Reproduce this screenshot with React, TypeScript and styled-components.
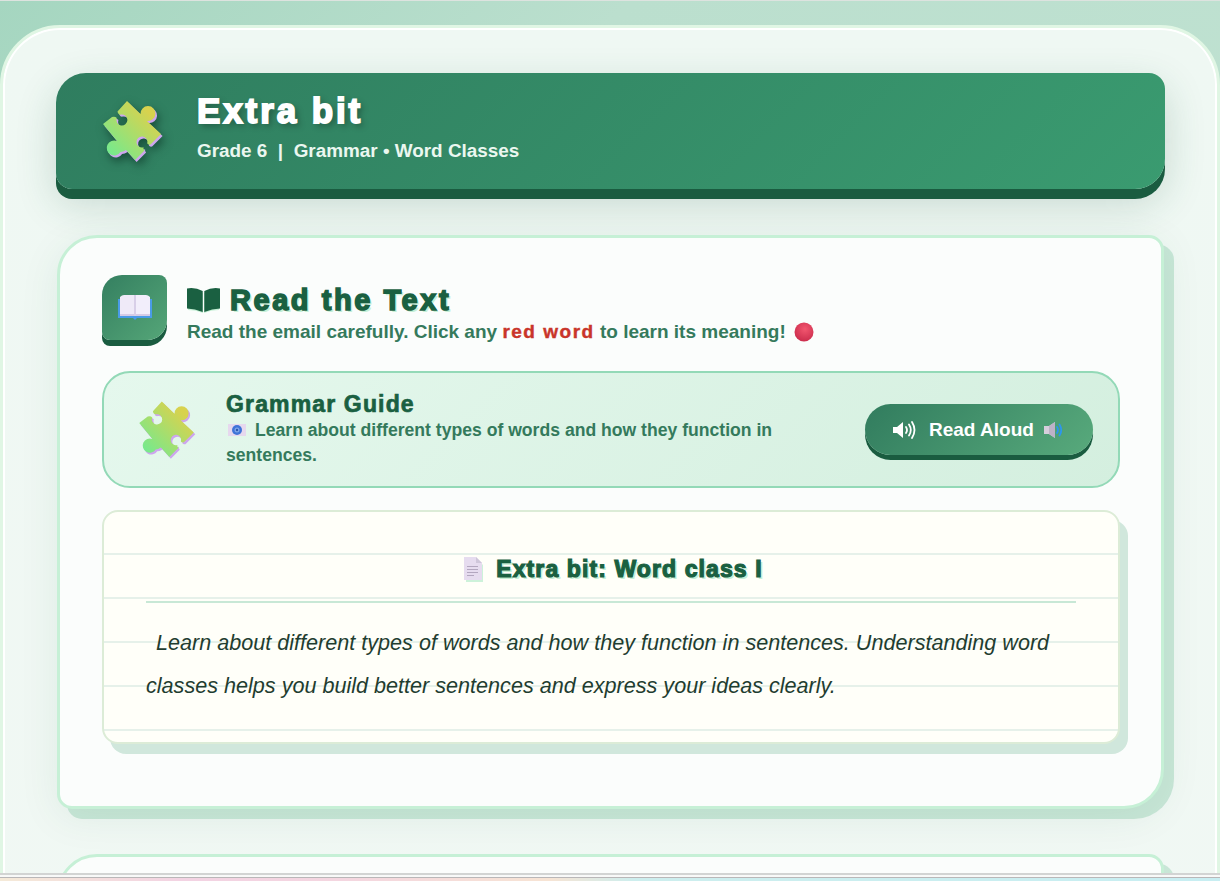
import * as React from "react";
import styled, { createGlobalStyle } from "styled-components";

const GlobalStyle = createGlobalStyle`
  html, body {
    margin: 0;
    height: 100%;
    overflow: hidden;
  }
  body {
    font-family: "Liberation Sans", Arial, sans-serif;
    background: linear-gradient(135deg, #a5d6c0 0%, #bbdfce 30%, #c2e3d3 100%);
  }
`;

const PUZZLE =
  "M37 10L50.5 23A7.5 7.5 0 1 1 57 30L71 43L60.5 53.5Q58 54 57.3 52.5A5.5 5.5 0 1 0 53.5 56.3Q53 58 54.5 59.5L45 69L36 59Q33 61 30.5 61A7.5 7.5 0 1 1 27 50L13 33L22 26Q25 25 26.8 27A5.5 5.5 0 1 0 31 23.6Q28 24 27.5 20.5Z";

const PuzzleIcon = ({ id, size, shadow }: { id: string; size: number; shadow: string }) => (
  <PuzzleSvg viewBox="0 0 85 80" width={size} height={(size * 80) / 85} shadow={shadow}>
    <defs>
      <linearGradient id={id} x1="0.1" y1="0.9" x2="0.8" y2="0.2">
        <stop offset="0" stopColor="#74ea8e" />
        <stop offset="1" stopColor="#d8d24e" />
      </linearGradient>
    </defs>
    <path d={PUZZLE} fill="#cda6ee" transform="translate(1.6 2)" />
    <path d={PUZZLE} fill={`url(#${id})`} />
  </PuzzleSvg>
);

const OpenBook = () => (
  <svg width="34" height="28" viewBox="0 0 34 28">
    <path d="M0 5h34v19H19l-2 2-2-2H0z" fill="#4a9be8" />
    <path d="M2 3q2-2 4-2h11v21H2z" fill="#efeaf8" />
    <path d="M17 1h11q2 0 4 2v19H17z" fill="#f2eefb" />
    <path d="M2 20h30v2H2z" fill="#d5cbe6" />
    <path d="M16 1h2v21h-2z" fill="#d8cfe8" />
  </svg>
);

const SolidBook = () => (
  <svg width="33" height="26" viewBox="0 0 33 26">
    <path d="M1 3Q9 2 16 6V26Q9 23 1 23z" fill="#c6f0d6" />
    <path d="M32 3Q24 2 17 6V26Q24 23 32 23z" fill="#c6f0d6" />
    <path d="M0 1.500Q8 0 15.700 4V25Q8 21.500 0 21.500z" fill="#1a6041" />
    <path d="M33 1.500Q25 0 17.300 4V25Q25 21.500 33 21.500z" fill="#1a6041" />
  </svg>
);

const RedBall = () => (
  <svg width="20" height="20" viewBox="0 0 20 20">
    <defs>
      <radialGradient id="ball" cx="0.55" cy="0.35" r="0.7">
        <stop offset="0" stopColor="#f2566f" />
        <stop offset="1" stopColor="#c92a4a" />
      </radialGradient>
    </defs>
    <circle cx="10" cy="10" r="9.500" fill="url(#ball)" />
  </svg>
);

const CameraBadge = () => (
  <svg width="18" height="14" viewBox="0 0 18 14">
    <rect x="0" y="1" width="18" height="12" fill="#e6d8ee" />
    <circle cx="9" cy="7" r="5" fill="#3f74d8" />
    <circle cx="9" cy="7" r="2.500" fill="#7fa6e8" />
    <circle cx="9" cy="7" r="1.200" fill="#2a55b0" />
  </svg>
);

const DocIcon = () => (
  <svg width="20" height="25" viewBox="0 0 20 25">
    <path d="M2 3h12l5 5v17H2z" fill="#cdf2da" />
    <path d="M0 0h12l6 6v17H0z" fill="#e6dcef" />
    <path d="M12 0l6 6h-6z" fill="#cfc6da" />
    <path d="M3 9h11v1H3zM3 12h11v1H3zM3 15h11v1H3zM3 18h7v1H3z" fill="#b3a7bf" />
  </svg>
);

const SpeakerWhite = () => (
  <svg width="24" height="20" viewBox="0 0 24 20" fill="none">
    <path d="M1 7h4l6-5v16l-6-5H1z" fill="#fff" />
    <path d="M14 7q2 3 0 6M17 4.500q3.600 5.500 0 11M20 2q5 8 0 16" stroke="#fff" strokeWidth="1.800" strokeLinecap="round" />
  </svg>
);

const SpeakerColor = () => (
  <svg width="20" height="18" viewBox="0 0 20 18" fill="none">
    <path d="M1 5h5l6-4v16l-6-4H1z" fill="#d6cedc" />
    <path d="M6 5l6-4v16l-6-4z" fill="#bdb2c7" />
    <path d="M14 6q2 3 0 6M16.500 3.500q3.500 5.500 0 11" stroke="#2c96f0" strokeWidth="1.800" strokeLinecap="round" />
  </svg>
);

const App = () => {
  return (
    <>
      <GlobalStyle />
      <Page>
        <Container>
          <Header>
            <PuzzleIcon id="puzzle-a" size={85} shadow="drop-shadow(2px 4px 5px rgba(0,30,20,0.5))" />
            <HeaderText>
              <HeaderTitle>Extra bit</HeaderTitle>
              <HeaderSub>Grade 6&nbsp; |&nbsp; Grammar • Word Classes</HeaderSub>
            </HeaderText>
          </Header>

          <Card>
            <SectionHead>
              <IconBox>
                <OpenBook />
              </IconBox>
              <SectionText>
                <SectionTitle>
                  <SolidBook />
                  Read the Text
                </SectionTitle>
                <SectionSub>
                  Read the email carefully. Click any <RedWord>red word</RedWord> to learn its meaning!
                  <RedBall />
                </SectionSub>
              </SectionText>
            </SectionHead>

            <Guide>
              <PuzzleIcon id="puzzle-b" size={80} shadow="none" />
              <GuideBody>
                <GuideTitle>Grammar Guide</GuideTitle>
                <GuideText>
                  <CameraBadge />
                  Learn about different types of words and how they function in sentences.
                </GuideText>
              </GuideBody>
              <ReadAloud>
                <SpeakerWhite />
                <ReadLabel>Read Aloud</ReadLabel>
                <SpeakerColor />
              </ReadAloud>
            </Guide>

            <Paper>
              <PaperHead>
                <DocIcon />
                <PaperTitle>Extra bit: Word class I</PaperTitle>
              </PaperHead>
              <PaperText>
                Learn about different types of words and how they function in sentences. Understanding word
                classes helps you build better sentences and express your ideas clearly.
              </PaperText>
            </Paper>
          </Card>

          <NextCard />
        </Container>
        <BottomBar>
          <Rainbow />
        </BottomBar>
      </Page>
    </>
  );
};

const Page = styled.div`
  height: 881px;
  overflow: hidden;
  border-top: 1px solid #dde3df;
  box-sizing: border-box;
`;

const Container = styled.main`
  margin-top: 24px;
  padding: 45px 52px 0 53px;
  height: 1200px;
  box-sizing: border-box;
  border: 3px solid #e0f6e4;
  border-radius: 60px;
  background: linear-gradient(180deg, #eff8f3, #f1f8f4);
  box-shadow: inset 0 0 0 2px #ffffff;
`;

const Header = styled.header`
  display: flex;
  align-items: center;
  gap: 22px;
  height: 116px;
  padding-left: 34px;
  border-radius: 30px 16px 30px 16px;
  background: linear-gradient(135deg, #2f7d5f 0%, #3a9b70 100%);
  box-shadow: 0 10px 0 #1a5c40, 0 14px 40px rgba(30, 90, 65, 0.2);
`;

const PuzzleSvg = styled.svg<{ shadow: string }>`
  display: block;
  flex: none;
  filter: ${(p) => p.shadow};
`;

const HeaderText = styled.div`
  margin-bottom: 9px;
`;

const HeaderTitle = styled.h1`
  margin: 0;
  font-size: 35px;
  line-height: 40px;
  font-weight: 900;
  letter-spacing: 2.900px;
  color: #fff;
  -webkit-text-stroke: 1.800px #fff;
  text-shadow: 3px 3px 6px rgba(0, 0, 0, 0.35);
`;

const HeaderSub = styled.p`
  margin: 9px 0 0;
  font-size: 18.900px;
  line-height: 22px;
  font-weight: 700;
  color: #ebf7f0;
`;

const Card = styled.section`
  margin: 46px 1px 0;
  padding: 37px 41px 62px 42px;
  border: 3px solid #c6f0d6;
  border-radius: 40px 15px 40px 15px;
  background: #fbfdfc;
  box-shadow: 10px 10px 0 rgba(60, 170, 115, 0.22), 0 8px 40px rgba(30, 90, 65, 0.08);
`;

const SectionHead = styled.div`
  display: flex;
  align-items: center;
  gap: 20px;
  margin-bottom: 25px;
`;

const SectionText = styled.div`
  padding-top: 6px;
`;

const IconBox = styled.div`
  flex: none;
  width: 65px;
  height: 65px;
  margin-bottom: 6px;
  display: flex;
  align-items: center;
  justify-content: center;
  border-radius: 20px 8px 20px 8px;
  background: linear-gradient(135deg, #347f60, #55a678);
  box-shadow: 0 6px 0 #1a5c40;
`;

const SectionTitle = styled.h2`
  margin: 0;
  display: flex;
  align-items: center;
  gap: 10px;
  font-size: 29px;
  line-height: 34px;
  font-weight: 900;
  letter-spacing: 2.550px;
  color: #1a6041;
  -webkit-text-stroke: 1.500px #1a6041;
  text-shadow: 2px 2px 0 #c6f0d6;
`;

const SectionSub = styled.p`
  margin: 2px 0 0;
  font-size: 19px;
  line-height: 26px;
  font-weight: 700;
  color: #357a5c;

  svg {
    margin-left: 8px;
    vertical-align: -4px;
  }
`;

const RedWord = styled.b`
  color: #c9352a;
  letter-spacing: 1.500px;
  -webkit-text-stroke: 0.400px #c9352a;
`;

const Guide = styled.div`
  display: flex;
  align-items: center;
  height: 117px;
  box-sizing: border-box;
  padding: 0 25px 0 23px;
  border: 2px solid #93d9b7;
  border-radius: 28px;
  background: linear-gradient(135deg, #e5f8ed, #d4efdf);
`;

const GuideBody = styled.div`
  flex: none;
  width: 570px;
  margin-left: 19px;
  padding-top: 1px;
`;

const GuideTitle = styled.h3`
  margin: 0;
  font-size: 23px;
  line-height: 24px;
  font-weight: 900;
  letter-spacing: 1.150px;
  color: #1a6041;
  -webkit-text-stroke: 0.700px #1a6041;
`;

const GuideText = styled.p`
  margin: 2px 0 0;
  font-size: 17.600px;
  line-height: 25px;
  font-weight: 700;
  color: #347a5c;

  svg {
    margin: 0 9px 0 2px;
    vertical-align: -1px;
  }
`;

const ReadAloud = styled.button`
  margin-left: auto;
  display: flex;
  align-items: center;
  width: 228px;
  height: 51px;
  padding: 0 0 0 27px;
  border: none;
  border-radius: 26px;
  font: 700 19px "Liberation Sans", Arial, sans-serif;
  color: #fff;
  background: linear-gradient(135deg, #317c5e, #58aa7c);
  box-shadow: 0 5px 0 #1a5c40;
`;

const ReadLabel = styled.span`
  margin: 0 9px 0 13px;
`;

const Paper = styled.article`
  margin-top: 22px;
  padding: 43px 42px 34.600px;
  border: 2px solid #dcecd7;
  border-radius: 16px;
  background-color: #fffff9;
  background-image: linear-gradient(transparent 42px, #e6f1ea 42px);
  background-size: 100% 44px;
  background-position: 0 -1px;
  box-shadow: 8px 10px 0 rgba(70, 165, 120, 0.24);
`;

const PaperHead = styled.div`
  display: flex;
  align-items: center;
  justify-content: center;
  gap: 12px;
  height: 28px;
  padding: 0 0 18px 5px;
  border-bottom: 2px solid #c8e8d6;
  margin-bottom: 18px;
`;

const PaperTitle = styled.h4`
  margin: 0;
  font-size: 23px;
  line-height: 28px;
  font-weight: 900;
  letter-spacing: 1.100px;
  color: #1a6041;
  -webkit-text-stroke: 1.200px #1a6041;
  text-shadow: 2px 2px 0 #c6f0d6;
`;

const PaperText = styled.p`
  margin: 0;
  font-size: 21.600px;
  line-height: 43.200px;
  font-style: italic;
  text-indent: 10px;
  color: #1f3d30;
`;

const NextCard = styled.section`
  margin: 45px 1px 0;
  height: 300px;
  border: 3px solid #c6f0d6;
  border-radius: 40px 15px 40px 15px;
  background: #fbfdfc;
  box-shadow: 10px 10px 0 rgba(60, 170, 115, 0.22);
`;

const BottomBar = styled.div`
  position: fixed;
  left: 0;
  right: 0;
  bottom: 0;
  height: 8px;
  box-sizing: border-box;
  padding-top: 2px;
  border-top: 2px solid #d2d4d3;
  background: #f8f9f8;
`;

const Rainbow = styled.div`
  height: 4px;
  box-sizing: border-box;
  border-top: 1px solid #b9b7b8;
  background: linear-gradient(90deg, #f5ead8 0%, #f3d3e3 15%, #f4d6e0 28%, #f7e4d4 45%, #cdeeee 52%, #c8eef2 100%);
`;

export default App;
